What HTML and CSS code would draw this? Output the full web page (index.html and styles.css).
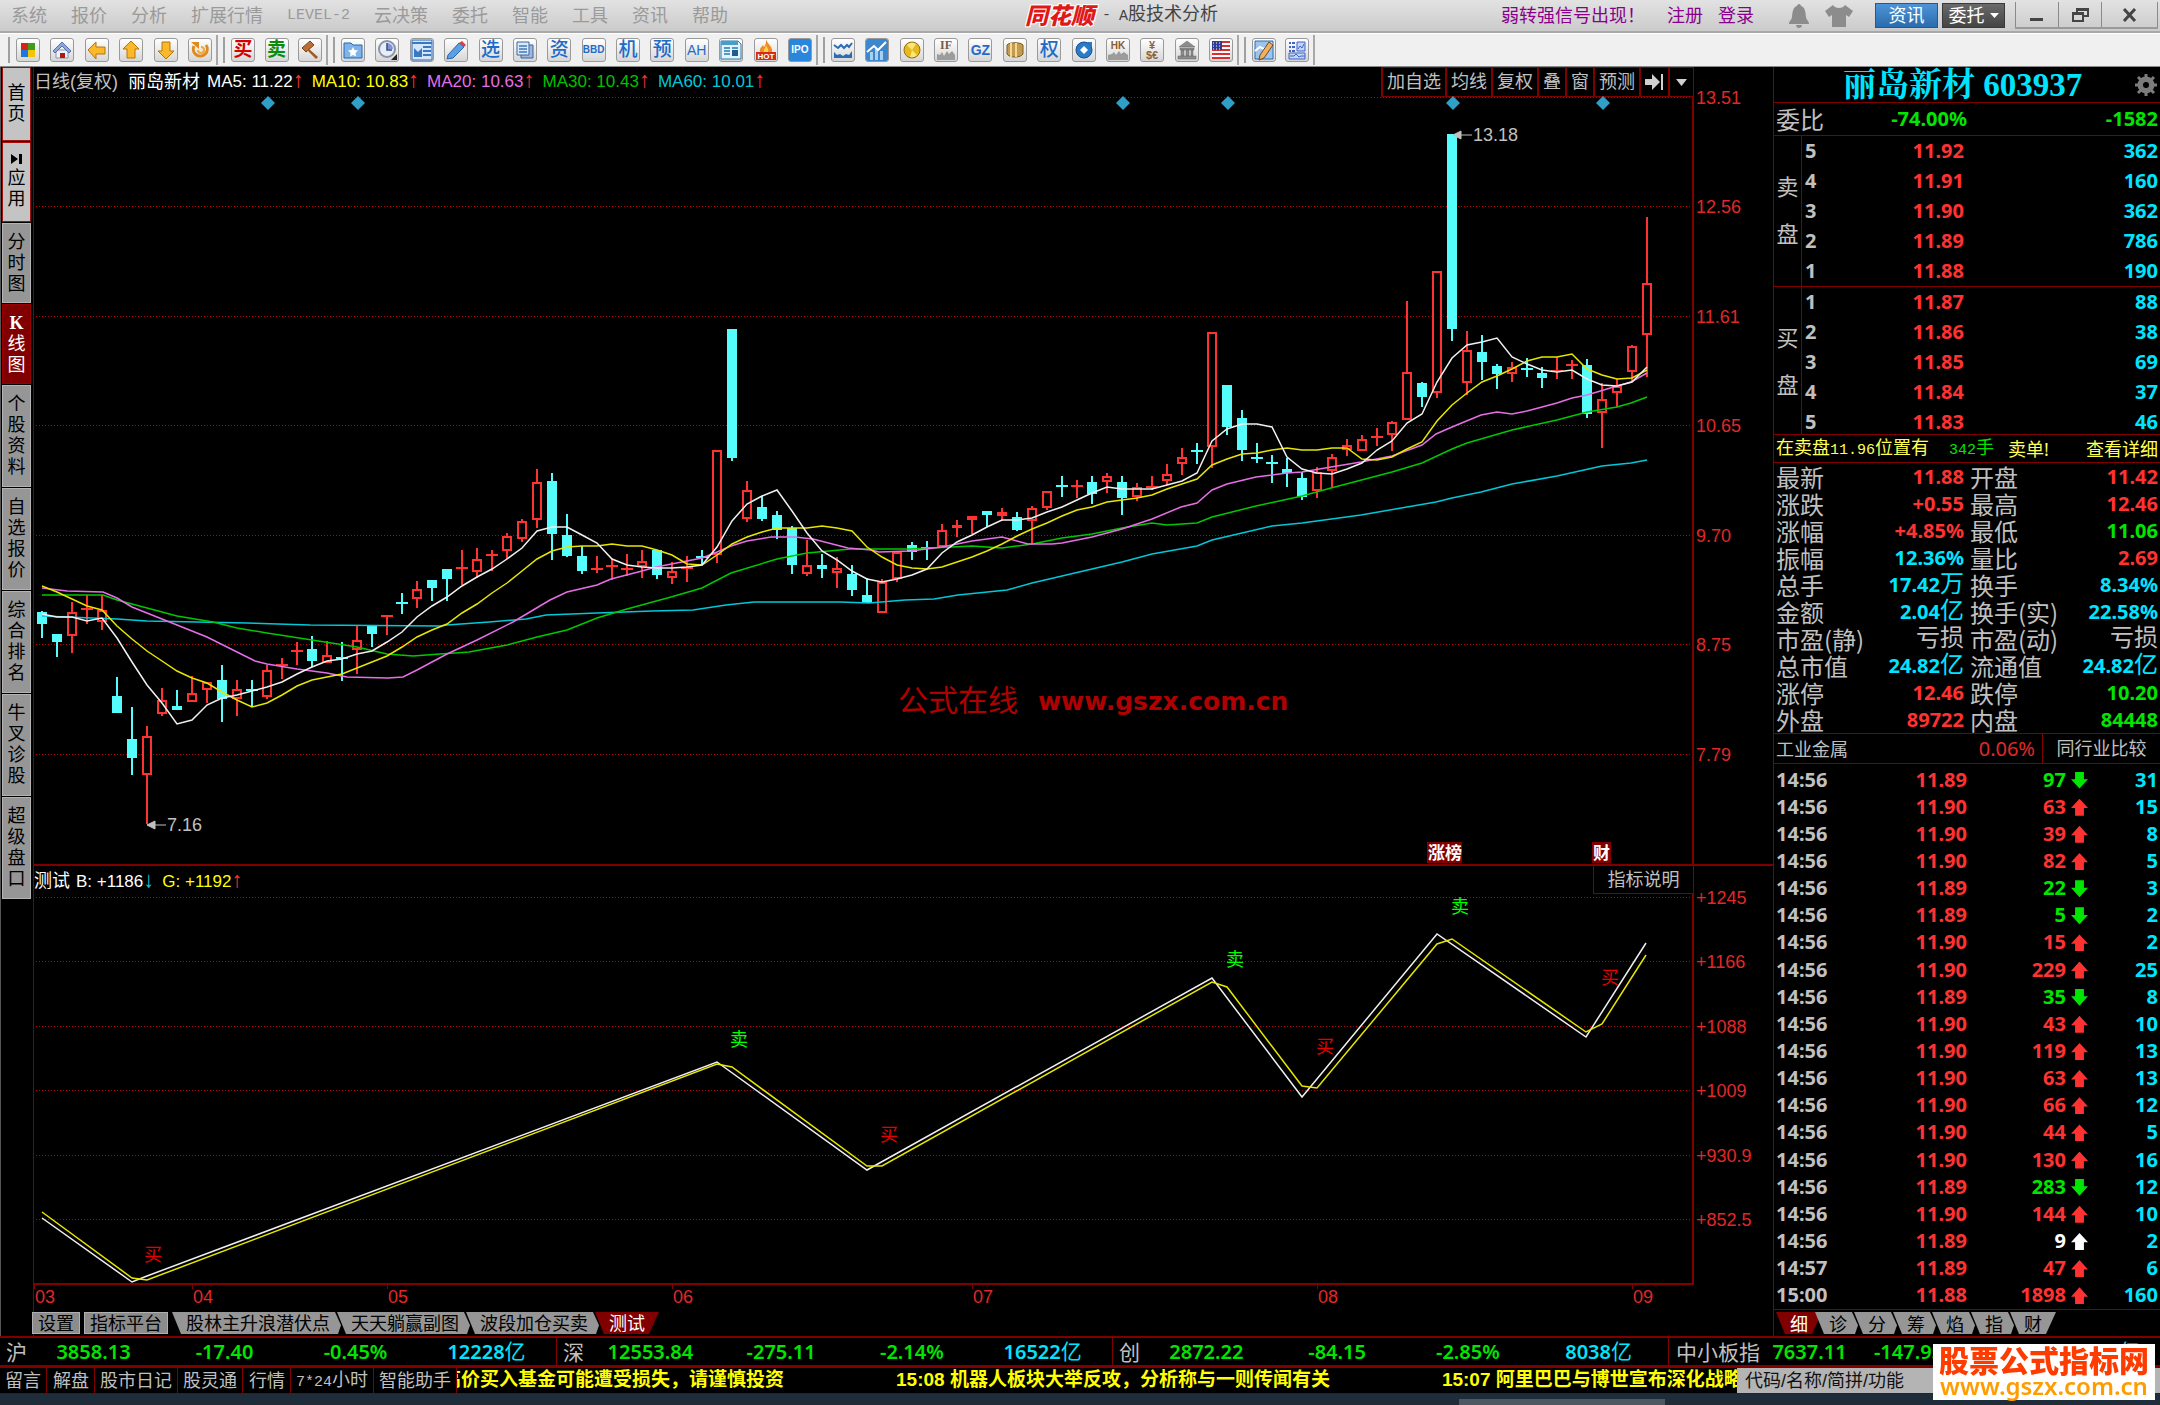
FILE: index.html
```html
<!DOCTYPE html>
<html lang="zh-CN">
<head>
<meta charset="utf-8">
<meta name="viewport" content="width=device-width, initial-scale=1">
<title>同花顺 - A股技术分析</title>
<link rel="stylesheet" href="styles.css">
</head>
<body>
<header class="titlebar">
  <nav class="menu">
    <a href="#">系统</a><a href="#">报价</a><a href="#">分析</a><a href="#">扩展行情</a><a href="#" class="mono">LEVEL-2</a><a href="#">云决策</a><a href="#">委托</a><a href="#">智能</a><a href="#">工具</a><a href="#">资讯</a><a href="#">帮助</a>
  </nav>
  <h1 class="brand"><span class="logo">同花顺</span><span class="mono dash">-</span><span><span class="mono">A</span>股技术分析</span></h1>
  <div class="account">
    <a href="#" class="notice">弱转强信号出现！</a>
    <a href="#">注册</a>
    <a href="#">登录</a>
    <svg class="bell" width="22" height="26" viewBox="0 0 22 26"><path d="M11 1c1 0 2 1 2 2 4 1 4.500 6 5 11 .3 3 3 4 3 7H1c0-3 2.700-4 3-7 .5-5 1-10 5-11 0-1 1-2 2-2zM8 22h6c0 2-1.500 3-3 3s-3-1-3-3z" fill="#8c8c8c"/></svg>
    <svg class="shirt" width="30" height="24" viewBox="0 0 30 24"><path d="M9 1c2 4 10 4 12 0l8 6-4 6-3-2v12H8V11l-3 2-4-6z" fill="#8c8c8c"/></svg>
    <button class="btn-news">资讯</button>
    <button class="btn-trade">委托<svg width="9" height="7" viewBox="0 0 9 7"><path d="M0 1h9L4.500 6z" fill="#fff"/></svg></button>
  </div>
  <div class="winbtns">
    <button aria-label="最小化"><svg width="14" height="16" viewBox="0 0 14 16"><path d="M0 11h13v3H0z" fill="#444"/></svg></button>
    <button aria-label="还原"><svg width="17" height="16" viewBox="0 0 17 16"><path d="M5 5V2h11v7h-4M1 6h10v8H1zM1 7h10M5 3h11" fill="none" stroke="#444" stroke-width="2"/></svg></button>
    <button aria-label="关闭" class="close"><svg width="15" height="14" viewBox="0 0 15 14"><path d="M2 1l11 12M13 1L2 13" stroke="#444" stroke-width="3"/></svg></button>
  </div>
</header>

<div class="toolbar">
  <div class="group g6">
    <button aria-label="主页"><svg viewBox="0 0 22 22"><path d="M4 4h7v7H4z" fill="#d62314"/><path d="M11 4h7v7h-7z" fill="#3f9c1c"/><path d="M4 11h7v7H4z" fill="#1e78dc"/><path d="M11 11h7v7h-7z" fill="#f2c40c"/></svg></button>
    <button aria-label="首页"><svg viewBox="0 0 22 22"><path d="M5 11h12v8H5z" fill="#eef1f6" stroke="#8a97b0"/><path d="M2 12l9-9 9 9-2 2-7-7-7 7z" fill="#8ea6da" stroke="#5470b0"/><path d="M9 14h5v5H9z" fill="#b01818"/></svg></button>
    <button aria-label="后退"><svg viewBox="0 0 22 22"><path d="M2 11l8-8v5h9v7h-9v5z" fill="#fbb829" stroke="#b8740a"/></svg></button>
    <button aria-label="上翻"><svg viewBox="0 0 22 22"><path d="M11 2l8 8h-4v9H7v-9H3z" fill="#fbb829" stroke="#b8740a"/></svg></button>
    <button aria-label="下翻"><svg viewBox="0 0 22 22"><path d="M11 20l8-8h-4V3H7v9H3z" fill="#fbb829" stroke="#b8740a"/></svg></button>
    <button aria-label="刷新"><svg viewBox="0 0 22 22"><path d="M5 7a7 7 0 1 0 12-1" fill="none" stroke="#e08a1c" stroke-width="3"/><path d="M2 3h8v7z" fill="#e08a1c"/><path d="M12 8a3 3 0 1 1-3 3" fill="none" stroke="#f0a83c" stroke-width="2"/></svg></button>
  </div>
  <div class="group g3">
    <button class="t red">买</button>
    <button class="t green">卖</button>
    <button aria-label="拍卖"><svg viewBox="0 0 22 22"><path d="M10 10l9 8-2 2-8-8z" fill="#9c5a20"/><path d="M3 9l8-7 4 4-8 7z" fill="#b87038" stroke="#7c4212"/></svg></button>
  </div>
  <div class="group g14">
    <button aria-label="收藏"><svg viewBox="0 0 22 22"><path d="M2 4h7l2 2h9v13H2z" fill="#7fb4ea" stroke="#2a66b0"/><path d="M11 8l1.500 3 3.500.5-2.500 2.500.6 3.500L11 16l-3 1.500.6-3.500L6 11.500l3.500-.5z" fill="#fff"/></svg></button>
    <button aria-label="时间"><svg viewBox="0 0 22 22"><circle cx="11" cy="10" r="8" fill="#e8eef8" stroke="#8a93a8" stroke-width="2"/><path d="M11 4a6 6 0 0 1 6 6h-6z" fill="#7c94d8"/><path d="M11 4v7h5" stroke="#3a4a80" fill="none" stroke-width="1.500"/><path d="M21 15v6h-6z" fill="#222"/></svg></button>
    <button aria-label="版面"><svg viewBox="0 0 22 22"><path d="M1 1h20v20H1z" fill="#d4e6fa" stroke="#2a66b0"/><path d="M1 4h20M12 8h8M12 12h8M12 16h8" stroke="#3a78c4" stroke-width="2"/><path d="M3 9l4 4 4-4v9H3z" fill="#3a78c4"/></svg></button>
    <button aria-label="画笔"><svg viewBox="0 0 22 22"><path d="M3 16L14 4l5 4L8 19l-6 1z" fill="#5aa0e4" stroke="#2a66b0"/><path d="M14 4l3-2 4 4-2 2z" fill="#d84040"/></svg></button>
    <button class="t blue">选</button>
    <button aria-label="文档"><svg viewBox="0 0 22 22"><path d="M7 6h12v13H7z" fill="#9db8dc" stroke="#3c649c"/><path d="M3 3h12v13H3z" fill="#dbe8f8" stroke="#3c649c"/><path d="M5 7h8M5 10h8M5 13h8" stroke="#3c78c0" stroke-width="1.500"/></svg></button>
    <button class="t blue">资</button>
    <button class="s blue">BBD</button>
    <button class="t blue">机</button>
    <button class="t blue">预</button>
    <button class="m blue">AH</button>
    <button aria-label="新闻"><svg viewBox="0 0 22 22"><path d="M1 2h17l3 3v15H1z" fill="#e4f2fb" stroke="#2a7cb0"/><path d="M1 2h17v4H1z" fill="#4a9ccc"/><path d="M4 9h6M4 12h6M4 15h6M12 9h6" stroke="#2a7cb0" stroke-width="1.500"/><path d="M12 11h6v6h-6z" fill="#1e5c90"/></svg></button>
    <button aria-label="热点"><svg viewBox="0 0 22 22"><path d="M11 0c1 5 7 7 6 13H5c-1-4 2-5 3-7l1 2c2-2 2-5 2-8z" fill="#f08a24"/><path d="M11 6c1 3 3 4 2 7H9c-1-3 2-4 2-7z" fill="#fbd44c"/><path d="M1 13h20v8H1z" fill="#d62a14"/><text x="11" y="20" text-anchor="middle" font-size="8" font-weight="700" fill="#fff">HOT</text></svg></button>
    <button class="s ipo">IPO</button>
  </div>
  <div class="group g12">
    <button aria-label="走势"><svg viewBox="0 0 22 22"><path d="M2 6l4 3 3-3 3 3 3-3 2 2 3-4" fill="none" stroke="#2a6cb8" stroke-width="2"/><path d="M2 19v-6l3 3 3-1 3 2 3-2 3 1 3-4v7z" fill="#2a6cb8"/></svg></button>
    <button aria-label="统计"><svg viewBox="0 0 22 22"><path d="M0 0h22v22H0z" fill="#3f87cc"/><path d="M4 13h3v8H4zM9 10h3v11H9zM14 12h3v9h-3z" fill="#a8d0f2"/><path d="M1 13l7-6 4 4 8-8" fill="none" stroke="#fff" stroke-width="2"/></svg></button>
    <button aria-label="黄金"><svg viewBox="0 0 22 22"><circle cx="11" cy="11" r="8" fill="#e8b820" stroke="#94700c"/><path d="M11 11L6 6a7 7 0 0 1 9-1zM11 11l-2 7a7 7 0 0 0 7-2z" fill="#fbe678"/></svg></button>
    <button aria-label="期指"><svg viewBox="0 0 22 22"><text x="11" y="10" text-anchor="middle" font-size="12" font-weight="700" fill="#7c5c40" font-family="Liberation Serif">IF</text><path d="M2 21v-6l3 1 2-3 2 4 3-5 2 3 3-3 3 4v5z" fill="#9c9c9c"/></svg></button>
    <button class="m blue bold">GZ</button>
    <button aria-label="商品"><svg viewBox="0 0 22 22"><path d="M3 6c2-3 14-3 16 0v9c-2 4-14 4-16 0z" fill="#c49a50" stroke="#7c5c20"/><path d="M7 4v14M12 4v14" stroke="#f0d898" stroke-width="2"/></svg></button>
    <button class="t blue">权</button>
    <button aria-label="基金"><svg viewBox="0 0 22 22"><circle cx="11" cy="11" r="8" fill="#2a7cc8" stroke="#185090"/><path d="M11 7l4 4-4 4-4-4z" fill="#fff"/><path d="M14 3h5v5z" fill="#2a7cc8"/></svg></button>
    <button aria-label="港股"><svg viewBox="0 0 22 22"><text x="11" y="10" text-anchor="middle" font-size="10" font-weight="700" fill="#8a5c30">HK</text><path d="M1 21v-5l4-1 2-2 2 3 3-4 2 3 3-2 4 3v5z" fill="#9c9c9c"/></svg></button>
    <button aria-label="外汇"><svg viewBox="0 0 22 22" font-size="11" font-weight="700" fill="#8a6440"><text x="11" y="10" text-anchor="middle">¥</text><text x="11" y="20" text-anchor="middle">$€</text></svg></button>
    <button aria-label="银行"><svg viewBox="0 0 22 22"><path d="M11 2l8 6H3zM4 9h14v2H4zM5 11h3v6H5zM10 11h3v6h-3zM15 11h2v6h-2zM2 17h18v3H2z" fill="#8c8c8c" stroke="#666" stroke-width=".5"/></svg></button>
    <button aria-label="美股"><svg viewBox="0 0 22 22"><path d="M2 2h18v18H2z" fill="#fff"/><path d="M2 3h18M2 7h18M2 11h18M2 15h18M2 19h18" stroke="#d83030" stroke-width="2"/><path d="M2 2h10v9H2z" fill="#2c3c94"/><path d="M3 4h8M3 7h8M3 10h8" stroke="#fff" stroke-dasharray="1 2"/></svg></button>
  </div>
  <div class="group g2">
    <button aria-label="编辑"><svg viewBox="0 0 22 22"><path d="M2 2h18v18H2z" fill="#9cc4ec" stroke="#2c6cb4"/><path d="M2 12l5-4 4 2 8-6" fill="none" stroke="#fff" stroke-width="2"/><path d="M7 16L16 3l4 3-9 13-5 2z" fill="#f0b060" stroke="#6c4820"/></svg></button>
    <button aria-label="布局"><svg viewBox="0 0 22 22"><path d="M3 4h2M3 8h2M3 12h2M6 4h3M6 8h3M6 12h3" stroke="#3f64c4" stroke-width="2"/><path d="M11 3h8v9h-8zM3 14h16v6H3z" fill="#c4d4f8" stroke="#3f64c4"/><path d="M12 10l2-3 2 2 2-4M4 17h4l2-2 3 3 2-1h4" fill="none" stroke="#3f64c4"/></svg></button>
  </div>
</div>

<main class="workspace">
  <nav class="sidenav">
    <button class="light h1">首<br>页</button>
    <button class="light h2"><svg width="14" height="10" viewBox="0 0 14 10"><path d="M1 0l7 5-7 5zM9 0h3v10H9z" fill="#000"/></svg>应<br>用</button>
    <button class="h2">分<br>时<br>图</button>
    <button class="h2 active"><b>K</b>线<br>图</button>
    <button>个<br>股<br>资<br>料</button>
    <button>自<br>选<br>报<br>价</button>
    <button>综<br>合<br>排<br>名</button>
    <button>牛<br>叉<br>诊<br>股</button>
    <button>超<br>级<br>盘<br>口</button>
  </nav>

  <section class="charts">
    <div class="chart-head">
      <div class="legend">
        <span class="gray period">日线(复权)</span><span class="white stock">丽岛新材</span>
        <span class="white ma">MA5: 11.22<i>↑</i></span><span class="yellow ma">MA10: 10.83<i>↑</i></span><span class="pink ma">MA20: 10.63<i>↑</i></span><span class="green ma">MA30: 10.43<i>↑</i></span><span class="teal ma">MA60: 10.01<i>↑</i></span>
      </div>
      <div class="chart-tools">
        <button>加自选</button><button>均线</button><button>复权</button><button>叠</button><button>窗</button><button>预测</button><button aria-label="移到最后"><svg width="19" height="18" viewBox="0 0 19 18"><path d="M0 6h7V1l8 8-8 8v-5H0zM16 1h2v16h-2z" fill="#d0d0d0"/></svg></button><button aria-label="更多"><svg width="11" height="7" viewBox="0 0 11 7"><path d="M0 0h11L5.500 7z" fill="#d0d0d0"/></svg></button>
      </div>
    </div>
    <svg class="plot" id="price" viewBox="34 97 1739 768" role="img" aria-label="K线图"></svg>
    <div class="chart-head sub">
      <div class="legend">
        <span class="white">测试</span><span class="white ma">B: +1186<i class="teal">↓</i></span><span class="yellow ma">G: +1192<i>↑</i></span>
      </div>
      <button class="explain">指标说明</button>
    </div>
    <svg class="plot" id="indicator" viewBox="34 894 1739 416" role="img" aria-label="测试指标"></svg>
    <div class="tabs chart-tabs">
      <button class="flat">设置</button><button class="flat">指标平台</button>
      <button class="tab">股林主升浪潜伏点</button><button class="tab">天天躺赢副图</button><button class="tab">波段加仓买卖</button><button class="tab active">测试</button>
    </div>
  </section>

  <aside class="quote">
    <h2 class="quote-title"><span>丽岛新材 603937</span>
      <svg width="22" height="22" viewBox="0 0 22 22"><circle cx="11" cy="11" r="6" fill="none" stroke="#7c7c7c" stroke-width="5"/><path d="M11 0v22M0 11h22M3 3l16 16M19 3L3 19" stroke="#7c7c7c" stroke-width="3"/><circle cx="11" cy="11" r="3" fill="#000"/></svg>
    </h2>
    <div class="ratio"><span class="label">委比</span><b class="lime">-74.00%</b><b class="lime">-1582</b></div>
    <div class="depth">
      <div class="side">卖<br>盘</div>
      <table>
        <tr><th>5</th><td>11.92</td><td>362</td></tr>
        <tr><th>4</th><td>11.91</td><td>160</td></tr>
        <tr><th>3</th><td>11.90</td><td>362</td></tr>
        <tr><th>2</th><td>11.89</td><td>786</td></tr>
        <tr><th>1</th><td>11.88</td><td>190</td></tr>
      </table>
    </div>
    <div class="depth buy">
      <div class="side">买<br>盘</div>
      <table>
        <tr><th>1</th><td>11.87</td><td>88</td></tr>
        <tr><th>2</th><td>11.86</td><td>38</td></tr>
        <tr><th>3</th><td>11.85</td><td>69</td></tr>
        <tr><th>4</th><td>11.84</td><td>37</td></tr>
        <tr><th>5</th><td>11.83</td><td>46</td></tr>
      </table>
    </div>
    <div class="alert"><span>在卖盘<span class="mono">11.96</span>位置有</span><span class="lime"><span class="mono">342</span>手</span><span>卖单!</span><a href="#">查看详细</a></div>
    <table class="detail">
      <tr><th>最新</th><td class="red">11.88</td><th>开盘</th><td class="red">11.42</td></tr>
      <tr><th>涨跌</th><td class="red">+0.55</td><th>最高</th><td class="red">12.46</td></tr>
      <tr><th>涨幅</th><td class="red">+4.85%</td><th>最低</th><td class="lime">11.06</td></tr>
      <tr><th>振幅</th><td class="aqua">12.36%</td><th>量比</th><td class="red">2.69</td></tr>
      <tr><th>总手</th><td class="aqua">17.42<i>万</i></td><th>换手</th><td class="aqua">8.34%</td></tr>
      <tr><th>金额</th><td class="aqua">2.04<i>亿</i></td><th>换手(实)</th><td class="aqua">22.58%</td></tr>
      <tr><th>市盈(静)</th><td class="gray"><i>亏损</i></td><th>市盈(动)</th><td class="gray"><i>亏损</i></td></tr>
      <tr><th>总市值</th><td class="aqua">24.82<i>亿</i></td><th>流通值</th><td class="aqua">24.82<i>亿</i></td></tr>
      <tr><th>涨停</th><td class="red">12.46</td><th>跌停</th><td class="lime">10.20</td></tr>
      <tr><th>外盘</th><td class="red">89722</td><th>内盘</th><td class="lime">84448</td></tr>
    </table>
    <div class="sector"><span>工业金属</span><span class="pct">0.06%</span><a href="#">同行业比较</a></div>
    <div class="ticks">
      <table>
        <tr class="dn"><th>14:56</th><td>11.89</td><td>97</td><td>31</td></tr>
        <tr class="up"><th>14:56</th><td>11.90</td><td>63</td><td>15</td></tr>
        <tr class="up"><th>14:56</th><td>11.90</td><td>39</td><td>8</td></tr>
        <tr class="up"><th>14:56</th><td>11.90</td><td>82</td><td>5</td></tr>
        <tr class="dn"><th>14:56</th><td>11.89</td><td>22</td><td>3</td></tr>
        <tr class="dn"><th>14:56</th><td>11.89</td><td>5</td><td>2</td></tr>
        <tr class="up"><th>14:56</th><td>11.90</td><td>15</td><td>2</td></tr>
        <tr class="up"><th>14:56</th><td>11.90</td><td>229</td><td>25</td></tr>
        <tr class="dn"><th>14:56</th><td>11.89</td><td>35</td><td>8</td></tr>
        <tr class="up"><th>14:56</th><td>11.90</td><td>43</td><td>10</td></tr>
        <tr class="up"><th>14:56</th><td>11.90</td><td>119</td><td>13</td></tr>
        <tr class="up"><th>14:56</th><td>11.90</td><td>63</td><td>13</td></tr>
        <tr class="up"><th>14:56</th><td>11.90</td><td>66</td><td>12</td></tr>
        <tr class="up"><th>14:56</th><td>11.90</td><td>44</td><td>5</td></tr>
        <tr class="up"><th>14:56</th><td>11.90</td><td>130</td><td>16</td></tr>
        <tr class="dn"><th>14:56</th><td>11.89</td><td>283</td><td>12</td></tr>
        <tr class="up"><th>14:56</th><td>11.90</td><td>144</td><td>10</td></tr>
        <tr class="up even"><th>14:56</th><td>11.89</td><td>9</td><td>2</td></tr>
        <tr class="up"><th>14:57</th><td>11.89</td><td>47</td><td>6</td></tr>
        <tr class="up"><th>15:00</th><td>11.88</td><td>1898</td><td>160</td></tr>
      </table>
    </div>
    <div class="tabs quote-tabs">
      <button class="tab active">细</button><button class="tab">诊</button><button class="tab">分</button><button class="tab">筹</button><button class="tab">焰</button><button class="tab">指</button><button class="tab last">财</button>
    </div>
  </aside>
</main>

<div class="indices">
  <div class="index"><span>沪</span><b>3858.13</b><b>-17.40</b><b>-0.45%</b><b class="aqua">12228<i>亿</i></b></div>
  <div class="index"><span>深</span><b>12553.84</b><b>-275.11</b><b>-2.14%</b><b class="aqua">16522<i>亿</i></b></div>
  <div class="index"><span>创</span><b>2872.22</b><b>-84.15</b><b>-2.85%</b><b class="aqua">8038<i>亿</i></b></div>
  <div class="index wide"><span>中小板指</span><b>7637.11</b><b>-147.95</b><b>-1.90%</b><b class="aqua">1021<i>亿</i></b></div>
</div>

<footer class="statusbar">
  <button>留言</button><button>解盘</button><button>股市日记</button><button>股灵通</button><button>行情</button><button><span class="mono">7*24</span>小时</button><button>智能助手</button>
  <div class="news">
    <a href="#" class="leaving">高价买入基金可能遭受损失，请谨慎投资</a>
    <a href="#">15:08 机器人板块大举反攻，分析称与一则传闻有关</a>
    <a href="#">15:07 阿里巴巴与博世宣布深化战略合作</a>
  </div>
  <input class="search" type="text" aria-label="代码/名称/简拼/功能" placeholder="代码/名称/简拼/功能">
</footer>
<div class="desktop"><span class="task"></span></div>
<div class="sitemark"><strong>股票公式指标网</strong><em>www.gszx.com.cn</em></div>
<script src="chart.js"></script>
</body>
</html>
```
FILE: styles.css
```css
* { box-sizing: border-box; }
body {
  margin: 0;
  min-height: 100vh;
  display: flex;
  flex-direction: column;
  background: #000;
  color: #c0c0c0;
  font: 18px/24px "Liberation Sans", "Noto Sans CJK SC", sans-serif;
  overflow-x: hidden;
}
a { color: inherit; text-decoration: none; }
button { font: inherit; color: inherit; padding: 0; margin: 0; border: 0; background: none; white-space: nowrap; }
i { font-style: normal; font-weight: 400; }
table { border-collapse: collapse; }
.mono { font-family: "Liberation Mono", monospace; font-size: 15px; }
.white { color: #fff; }
.gray { color: #c0c0c0; }
.yellow { color: #ff0; }
.pink { color: #e66ee6; }
.green { color: #00c000; }
.teal { color: #00c8d8; }
.lime { color: #00e600; }
.aqua { color: #00e5ff; }
.red { color: #ff3232; }

/* title bar */
.titlebar {
  height: 33px;
  display: grid;
  grid-template-columns: 1025px 1fr auto auto;
  align-items: center;
  background: linear-gradient(#e2e2e2, #cbcbcb);
  border-bottom: 2px solid #a8a8a8;
}
.menu { display: flex; gap: 24px; padding-left: 11px; color: #9a9a9a; }
.brand { margin: 0; font-size: 18px; font-weight: 400; display: flex; align-items: center; color: #444; white-space: nowrap; }
.logo {
  font-size: 23px;
  font-weight: 900;
  font-style: italic;
  color: #e01818;
  text-shadow: 1px 1px #fff, -1px -1px #fff, 1px -1px #fff, -1px 1px #fff;
}
.dash { padding: 0 8px; }
.account { display: flex; align-items: center; color: #8b008b; white-space: nowrap; }
.account a { margin-right: 15px; }
.account .notice { margin-right: 22px; }
.bell { margin-left: 19px; }
.shirt { margin: 0 21px 0 14px; }
.btn-news, .btn-trade { width: 63px; height: 25px; color: #fff; }
.btn-news { background: linear-gradient(#4d94d6, #2a6cae); border: 1px solid #245a90; margin-right: 4px; }
.btn-trade { background: linear-gradient(#6a6a6a, #444); border: 1px solid #3a3a3a; display: flex; align-items: center; justify-content: center; gap: 5px; }
.winbtns { display: flex; margin-left: 10px; margin-right: 2px; height: 27px; border-bottom: 2px solid #999; }
.winbtns button { width: 43px; border-left: 1px solid #8a8a8a; display: flex; align-items: center; justify-content: center; }
.winbtns .close { width: 57px; border-right: 1px solid #8a8a8a; }

/* toolbar */
.toolbar { height: 34px; display: flex; align-items: center; background: #f0f0f0; border-bottom: 1px solid #888; border-top: 1px solid #fff; }
.group {
  height: 30px;
  display: flex;
  justify-content: space-between;
  align-items: center;
  border-right: 2px solid #a8a8a8;
  padding-right: 4px;
  margin-left: 5px;
  padding-left: 8px;
  position: relative;
}
.group::before { content: ""; position: absolute; left: 0; top: 2px; bottom: 2px; width: 2px; background: #a0a0a0; }
.g6 { width: 210px; margin-left: 8px; }
.g3 { width: 105px; }
.g14 { width: 485px; }
.g12 { width: 416px; }
.g2 { width: 71px; }
.group button {
  width: 24px;
  height: 24px;
  border: 1px solid #9a9a9a;
  border-radius: 3px;
  background: linear-gradient(#fff, #d6d6d6);
  display: flex;
  align-items: center;
  justify-content: center;
  overflow: hidden;
}
.group svg { width: 22px; height: 22px; flex: none; }
.group .t { font-size: 19px; line-height: 22px; font-weight: 500; }
.group .t.red, .group .t.green { font-weight: 700; }
.group .m { font-size: 14px; }
.group .s { font-size: 10px; font-weight: 700; }
.group .bold { font-weight: 700; }
.group .red { color: #d60000; }
.group .green { color: #0a8c0a; }
.group .blue { color: #1e6cc8; }
.group .ipo { background: #2a86dc; color: #fff; }

/* workspace */
.workspace { display: grid; grid-template-columns: 33px minmax(0, 1fr) 387px; }
.sidenav { padding: 0 1px; display: flex; flex-direction: column; gap: 1px; border-left: 1px solid #555; }
.sidenav button {
  height: 102px;
  width: 29px;
  background: #969696;
  border: 1px solid #b4b4b4;
  color: #000;
  line-height: 21px;
  display: block;
}
.sidenav .light { background: #c4c4c4; border-color: #a01010; }
.sidenav .h1 { height: 74px; }
.sidenav .h2 { height: 80px; }
.sidenav .active { background: #800000; border-color: #900; color: #fff; }
.sidenav b, .sidenav svg { display: block; margin: 0 auto; }
.sidenav b { font-family: "Liberation Serif", serif; }
.sidenav svg { margin-bottom: 4px; }

/* charts */
.charts { border-left: 1px solid #800000; min-width: 0; display: flex; flex-direction: column; }
.chart-head { height: 30px; margin-right: 79px; display: flex; justify-content: space-between; align-items: flex-start; border-right: 1px solid #800000; white-space: nowrap; }
.legend { display: flex; line-height: 30px; }
.period { width: 94px; }
.stock { width: 79px; }
.ma { font-size: 17px; margin-right: 8px; }
.ma i { color: #ff3232; font-size: 22px; line-height: 20px; }
.ma i.teal { color: #00c8d8; }
.chart-tools { display: flex; height: 30px; border-bottom: 1px solid #800000; border-top: 1px solid #800000; }
.chart-tools button { padding: 0 4px; border-left: 2px solid #800000; line-height: 27px; display: flex; align-items: center; }
.chart-tools button:last-child { padding: 0 6px; }
.plot { display: block; width: 100%; height: auto; overflow: visible; }
.chart-head.sub { height: 29px; }
.sub .legend span:first-child { margin-right: 6px; }
.sub .legend { line-height: 33px; }
.explain { width: 100px; height: 29px; padding-top: 2px; border: 1px solid #800000; border-width: 0 0 1px 1px; }
.grid { stroke: #b40000; stroke-width: 1; stroke-dasharray: 1 2; }
.frame { stroke: #800000; stroke-width: 2; fill: none; }
.axis { fill: #e02828; font-size: 18px; }
.note { fill: #c0c0c0; font-size: 18px; }
.line { fill: none; stroke-width: 1.5; }
.rise { fill: #000; stroke: #ff3232; stroke-width: 2; }
.fall { fill: #54fcfc; stroke: #54fcfc; stroke-width: 2; }
.mark { font-size: 18px; text-anchor: middle; }
.badge { font-size: 17px; fill: #fff; font-weight: 700; }
.water { fill: #b00000; font-size: 30px; }
.water.latin { font-family: "DejaVu Sans"; font-weight: 700; font-size: 25px; }

/* slanted tabs */
.tabs { height: 26px; padding: 2px 0; display: flex; }
.tab {
  height: 22px;
  padding: 0 14px;
  margin-right: -7px;
  line-height: 24px;
  background: #969696;
  color: #000;
  clip-path: polygon(0 0, calc(100% - 9px) 0, calc(100% - 3px) 60%, calc(100% - 6px) 100%, 9px 100%);
}
.tab.active, .tab.last { clip-path: polygon(0 0, 100% 0, calc(100% - 10px) 100%, 9px 100%); }
.tab.active { background: #800000; color: #fff; }
.flat { background: #8c8c8c; color: #000; border: 1px solid #b0b0b0; padding: 0 5px; margin-right: 4px; line-height: 22px; }
.chart-tabs .flat:first-child { margin-left: -2px; }

/* quote panel */
.quote { border-left: 1px solid #800000; display: flex; flex-direction: column; font-family: "Noto Sans", "Noto Sans CJK SC", sans-serif; }
.quote-title { margin: 0; height: 36px; display: grid; grid-template-columns: 1fr auto; align-items: center; text-align: center; border-bottom: 1px solid #800000; font: 700 33px/34px "Liberation Serif", "Noto Serif CJK SC", "Noto Sans CJK SC", serif; color: #00e5ff; }
.quote-title span { padding-left: 16px; }
.quote-title svg { margin-right: 3px; }
.quote b, .quote td, .depth th, .ticks th { font-size: 20px; font-weight: 700; }
.ratio { height: 33px; display: grid; grid-template-columns: 60px 131px 1fr; align-items: center; padding: 0 2px; border-bottom: 1px solid #800000; text-align: right; }
.label, .detail th, .detail i { font-size: 24px; font-weight: 400; font-family: "Noto Sans CJK SC", sans-serif; }
.label { text-align: left; line-height: 30px; }
.depth { display: grid; grid-template-columns: 28px 1fr; align-items: start; border-bottom: 1px solid #800000; }
.depth.buy { grid-template-rows: 147px; }
.side { height: 100%; border-right: 1px solid #800000; font: 22px/47px "Noto Sans CJK SC", sans-serif; text-align: center; padding-top: 26px; }
.depth table { width: 100%; table-layout: fixed; }
.depth tr { height: 30px; }
.depth th { width: 20px; padding: 0 0 0 3px; text-align: left; }
.depth td { padding: 0; text-align: right; line-height: 28px; color: #ff3232; width: 142px; }
.depth td:last-child { color: #00e5ff; width: auto; padding-right: 2px; }
.alert { height: 28px; display: flex; align-items: center; padding: 0 2px; color: #ffff54; border-bottom: 1px solid #800000; white-space: nowrap; }
.alert > :nth-child(2) { margin-left: 20px; }
.alert > :nth-child(3) { margin-left: 14px; }
.alert a { margin-left: auto; }
.detail { width: 100%; table-layout: fixed; }
.detail tr { height: 27px; }
.detail th, .detail td { padding: 0; line-height: 27px; text-align: left; white-space: nowrap; }
.detail i { line-height: 0; }
.detail th { width: 100px; padding-left: 2px; line-height: 26px; }
.detail th:nth-child(3) { width: 104px; padding-left: 6px; }
.detail td { width: 90px; text-align: right; }
.detail td:last-child { width: auto; padding-right: 2px; }
.sector { height: 31px; display: flex; align-items: center; border: 1px solid #800000; border-width: 1px 0; padding-left: 2px; }
.sector .pct { margin-left: auto; padding-right: 7px; color: #e02828; font-size: 20px; }
.sector a { width: 118px; line-height: 29px; text-align: center; border-left: 1px solid #800000; }
.ticks { flex: 1; padding-top: 2px; border-bottom: 1px solid #800000; }
.ticks table { width: 100%; height: 543px; table-layout: fixed; }
.ticks th, .ticks td { padding: 0; line-height: 24px; text-align: right; color: #ff3232; }
.ticks th { width: 80px; padding-left: 2px; text-align: left; color: #c0c0c0; }
.ticks td:nth-child(2) { width: 113px; }
.ticks td:nth-child(3) { width: 121px; }
.ticks td:last-child { color: #00e5ff; padding-right: 2px; }
.ticks td:nth-child(3)::after {
  content: "";
  display: inline-block;
  width: 17px;
  height: 17px;
  margin: 0 0 0 5px;
  vertical-align: -2px;
  background: currentColor;
  clip-path: polygon(50% 0, 100% 55%, 76% 55%, 76% 100%, 24% 100%, 24% 55%, 0 55%);
}
.ticks .dn td:nth-child(3) { color: #00e600; }
.ticks .dn td:nth-child(3)::after { clip-path: polygon(50% 100%, 100% 45%, 76% 45%, 76% 0, 24% 0, 24% 45%, 0 45%); }
.ticks .even td:nth-child(3) { color: #fff; }
.quote-tabs { padding-left: 2px; }

/* index strip */
.indices { height: 32px; display: grid; grid-template-columns: 557fr 556fr 556fr 491fr; border-top: 2px solid #800000; border-bottom: 3px solid #800000; font-family: "Noto Sans", "Noto Sans CJK SC", sans-serif; line-height: 27px; }
.index { display: grid; grid-template-columns: 23px repeat(4, 1fr); padding: 0 4px 0 5px; text-align: center; border-right: 1px solid #800000; white-space: nowrap; }
.index span, .index i { font: 21px/27px "Noto Sans CJK SC", sans-serif; }
.index i { line-height: 0; }
.index b { font-size: 20px; font-weight: 600; color: #00e600; }
.index b.aqua { color: #00e5ff; }
.index.wide { grid-template-columns: 84px repeat(4, 1fr); padding-left: 7px; border: 0; }

/* status bar */
.statusbar { height: 26px; display: flex; border-bottom: 1px solid #800000; }
.statusbar button { padding: 0 5px; border-right: 1px solid #800000; }
.statusbar button:nth-child(3n+2) { padding-left: 6px; }
.news { flex: 1; min-width: 0; overflow: hidden; display: flex; gap: 112px; color: #ff0; font-size: 19px; font-weight: 700; white-space: nowrap; }
.news .leaving { margin-left: -15px; }
.search { width: 423px; border: 0; padding: 0 8px; background: #b4b4b4; font: inherit; color: #000; border-radius: 0; }
.search::placeholder { color: #111; opacity: 1; }

.desktop { flex: 1; min-height: 11px; background: #1e2d39; display: flex; }
.task { width: 206px; margin: 5px 0 0 1459px; background: #4c5964; }
.sitemark { position: fixed; right: 5px; bottom: 5px; width: 222px; height: 56px; background: #fff; display: flex; flex-direction: column; align-items: center; white-space: nowrap; }
.sitemark strong { font: 900 30px/31px "Noto Sans CJK SC", sans-serif; color: #ff3c00; }
.sitemark em { font: 600 24px/22px "Noto Sans", sans-serif; color: #ff9c00; }
```
FILE: chart.js
```javascript
const NS = "http://www.w3.org/2000/svg";
const STEP = 15;
const FIRST = 42;
const RIGHT = 1693;

function add(svg, name, attrs, text) {
  const el = document.createElementNS(NS, name);
  for (const key in attrs) el.setAttribute(key, attrs[key]);
  if (text) el.textContent = text;
  svg.appendChild(el);
}
const xAt = i => Math.round(FIRST + i * STEP);

// direction (1 rise, 0 fall), body top, body bottom, high, low
const candles = [
  [0,612,624,611,638],[0,634,642,634,657],[1,612,636,602,653],[1,609,610,595,624],[1,610,622,595,630],
  [0,696,713,677,713],[0,739,758,707,775],[1,736,775,726,824],[1,700,714,688,716],[0,706,710,690,710],
  [1,693,702,676,702],[1,682,690,682,703],[0,680,699,665,722],[1,689,699,680,716],[0,690,690,680,707],
  [1,670,697,665,699],[1,664,666,658,679],[1,651,651,642,665],[0,649,661,636,667],[1,655,663,641,663],
  [0,657,659,642,681],[1,640,650,626,674],[0,626,634,626,647],[1,615,617,615,635],[0,603,604,593,614],
  [1,589,599,581,608],[0,580,588,580,601],[0,569,579,569,601],[1,568,568,550,585],[1,559,572,548,578],
  [1,555,555,550,571],[1,536,551,533,559],[1,521,539,519,542],[1,482,520,469,528],[0,481,534,473,560],
  [0,535,556,514,557],[0,556,571,546,574],[1,568,570,556,573],[1,565,567,558,580],[1,569,569,554,576],
  [1,561,567,550,578],[0,550,575,550,579],[1,571,578,562,584],[1,568,568,556,582],[0,556,558,550,565],
  [1,450,555,450,563],[0,329,458,329,461],[1,490,519,481,522],[0,507,519,496,521],[0,515,530,511,539],
  [0,528,565,526,574],[1,565,574,540,576],[0,565,569,554,578],[1,568,573,557,588],[0,574,590,565,596],
  [0,595,603,578,603],[1,582,613,579,613],[1,552,579,552,582],[0,545,552,542,560],[0,548,548,541,560],
  [1,530,547,524,547],[1,525,528,520,537],[1,516,520,516,534],[0,511,515,511,527],[1,512,516,508,521],
  [0,517,530,512,531],[1,508,521,506,544],[1,491,508,491,510],[0,485,487,476,497],[1,486,487,480,498],
  [0,482,494,476,504],[1,476,482,473,493],[0,482,498,476,515],[1,487,497,483,501],[1,487,487,476,490],
  [1,474,481,464,485],[1,457,464,448,475],[0,450,452,443,464],[1,332,447,332,468],[0,385,427,385,435],
  [0,418,450,410,461],[0,457,459,443,463],[0,463,463,455,483],[0,469,473,458,487],[0,478,497,472,500],
  [1,472,491,467,498],[1,457,471,454,487],[1,445,450,439,456],[1,439,451,435,451],[1,436,438,428,446],
  [1,422,435,421,451],[1,372,420,301,420],[0,383,397,382,407],[1,271,393,271,398],[0,134,329,134,341],
  [1,350,383,331,395],[0,352,362,335,380],[0,366,374,364,389],[1,367,374,362,382],[0,369,369,358,377],
  [0,373,378,367,388],[1,371,371,357,379],[1,364,366,360,379],[0,365,414,359,418],[1,399,413,383,448],
  [1,386,393,379,407],[1,346,372,345,382],[1,283,335,217,377]
];

const ma5 = [614,617,617,621,618,638,662,685,703,724,720,705,698,695,691,687,682,674,667,661,659,654,651,642,632,617,606,
  597,586,577,569,559,548,531,527,527,535,543,559,565,567,568,568,567,565,547,521,504,496,490,511,533,551,560,571,579,582,579,575,569,
  553,542,535,527,520,520,518,512,507,500,493,487,489,489,489,485,481,473,441,429,424,424,427,457,469,473,474,469,463,450,441,423,414,
  382,358,345,342,338,357,364,370,372,370,379,385,386,382,367];
const ma10 = [586,592,599,606,610,626,639,651,661,671,678,683,692,700,707,703,695,686,680,677,674,668,662,656,647,637,630,
  624,613,604,593,583,571,559,551,547,546,546,544,546,546,550,555,564,565,555,544,537,532,528,528,528,526,528,531,547,557,565,568,569,
  567,562,557,551,544,536,529,523,516,510,507,502,500,498,495,489,484,479,465,459,454,453,450,448,450,450,448,448,459,460,457,449,442,
  421,405,393,382,376,369,361,357,357,354,369,375,379,378,370];

// sparse [x, y] vertices for the slower averages
const ma20 = [[42,588],[67,591],[103,592],[117,598],[132,607],[147,613],[177,625],[207,637],[237,652],[255,661],[267,664],[297,669],[327,673],
  [347,677],[388,678],[403,677],[417,670],[447,654],[477,640],[513,622],[550,600],[567,592],[597,585],[611,579],[642,571],[656,567],[687,561],
  [702,558],[717,552],[731,546],[747,541],[771,537],[795,537],[813,539],[848,548],[871,550],[879,552],[911,551],[942,547],[972,541],[1002,537],
  [1028,544],[1052,544],[1062,543],[1092,537],[1122,529],[1152,519],[1181,507],[1197,503],[1212,490],[1227,484],[1256,477],[1287,473],[1302,472],
  [1331,467],[1361,462],[1392,456],[1422,445],[1436,434],[1452,427],[1481,415],[1497,412],[1512,414],[1527,411],[1557,403],[1572,398],[1587,395],
  [1617,386],[1631,382],[1647,373]];
const ma30 = [[42,595],[103,595],[117,600],[147,608],[177,616],[213,622],[237,628],[267,633],[312,640],[357,647],[387,654],[413,656],[440,654],
  [469,652],[507,645],[537,637],[567,630],[597,618],[627,609],[671,597],[702,588],[731,573],[777,559],[807,553],[851,549],[911,549],[972,546],
  [1002,548],[1032,544],[1062,538],[1092,534],[1122,528],[1152,523],[1167,525],[1197,523],[1212,517],[1256,506],[1302,496],[1331,488],[1392,472],
  [1422,463],[1452,449],[1467,443],[1512,430],[1557,420],[1587,412],[1617,407],[1631,403],[1647,397]];
const ma60 = [[42,616],[117,619],[147,621],[197,622],[247,623],[310,625],[440,626],[447,625],[489,622],[526,619],[546,615],[597,613],[652,611],
  [693,610],[726,605],[754,602],[840,602],[869,603],[905,600],[934,599],[958,595],[1007,590],[1032,583],[1062,576],[1092,569],[1122,562],
  [1152,554],[1197,546],[1212,540],[1242,533],[1272,526],[1302,523],[1361,515],[1407,507],[1436,502],[1452,498],[1481,492],[1512,484],[1557,476],
  [1602,466],[1631,463],[1647,460]];

function line(svg, points, color) {
  add(svg, "polyline", { class: "line", stroke: color, points: points.map(p => p.join(",")).join(" ") });
}
function arrow(svg, x, y) {
  add(svg, "path", { d: `M${x} ${y}l8-4v8zM${x} ${y}h19`, fill: "#c0c0c0", stroke: "#c0c0c0", "stroke-width": 1 });
}
function axis(svg, rows) {
  rows.forEach(([y, label]) => {
    add(svg, "line", { class: "grid", x1: 36, x2: RIGHT, y1: y + 0.5, y2: y + 0.5 });
    add(svg, "text", { class: "axis", x: RIGHT + 3, y: y + 7 }, label);
  });
}

const price = document.getElementById("price");
axis(price, [[97,"13.51"],[206,"12.56"],[316,"11.61"],[425,"10.65"],[535,"9.70"],[644,"8.75"],[754,"7.79"]]);
add(price, "path", { class: "frame", d: `M${RIGHT} 97V865M34 865H1773` });
add(price, "text", { class: "water", x: 898, y: 711 }, "公式在线");
add(price, "text", { class: "water latin", x: 1038, y: 710 }, "www.gszx.com.cn");

candles.forEach(([up, top, bottom, high, low], i) => {
  const x = xAt(i);
  const cls = up ? "rise" : "fall";
  add(price, "path", { class: cls, d: `M${x} ${high}V${top}M${x} ${bottom}V${low}` });
  if (bottom - top < 3) add(price, "path", { class: cls, d: `M${x - 6} ${(top + bottom) >> 1}h12` });
  else add(price, "rect", { class: cls, x: x - 4, y: top + 1, width: 8, height: bottom - top - 2 });
});
line(price, ma60, "#00c8d8");
line(price, ma30, "#00c800");
line(price, ma20, "#e66ee6");
line(price, ma10.map((y, i) => [xAt(i), y]), "#e6e600");
line(price, ma5.map((y, i) => [xAt(i), y]), "#f0f0f0");

[268, 358, 1123, 1228, 1453, 1603].forEach(x =>
  add(price, "path", { d: `M${x} 96l7 7-7 7-7-7z`, fill: "#2f9fc8" }));
arrow(price, 1453, 135);
add(price, "text", { class: "note", x: 1473, y: 141 }, "13.18");
arrow(price, 147, 825);
add(price, "text", { class: "note", x: 167, y: 831 }, "7.16");
[[1427, 35, "涨榜"], [1592, 19, "财"]].forEach(([x, w, label]) => {
  add(price, "rect", { x, y: 842, width: w, height: 21, fill: "#800000" });
  add(price, "text", { class: "badge", x: x + 1, y: 859 }, label);
});

const ind = document.getElementById("indicator");
axis(ind, [[897,"+1245"],[961,"+1166"],[1026,"+1088"],[1090,"+1009"],[1155,"+930.9"],[1219,"+852.5"]]);
add(ind, "path", { class: "frame", d: `M${RIGHT} 894V1284H34` });
line(ind, [[42,1218],[132,1282],[147,1276],[717,1062],[867,1170],[1212,978],[1302,1097],[1437,934],[1586,1037],[1646,943]], "#f0f0f0");
line(ind, [[42,1212],[132,1278],[147,1280],[717,1064],[732,1067],[867,1166],[882,1166],[1212,982],[1227,987],[1302,1086],[1317,1088],
  [1437,944],[1452,939],[1586,1032],[1602,1024],[1646,955]], "#e6e600");
[[739,1039,1],[1235,959,1],[1460,906,1],[153,1254,0],[889,1134,0],[1325,1046,0],[1610,977,0]].forEach(([x, y, sell]) =>
  add(ind, "text", { class: "mark", x, y: y + 7, fill: sell ? "#00ff00" : "#e60000" }, sell ? "卖" : "买"));
[[34,"03"],[192,"04"],[387,"05"],[672,"06"],[972,"07"],[1317,"08"],[1632,"09"]].forEach(([x, label]) => {
  add(ind, "path", { stroke: "#800000", d: `M${x + 0.5} 1284v5` });
  add(ind, "text", { class: "axis", x: x + 1, y: 1303 }, label);
});
```
